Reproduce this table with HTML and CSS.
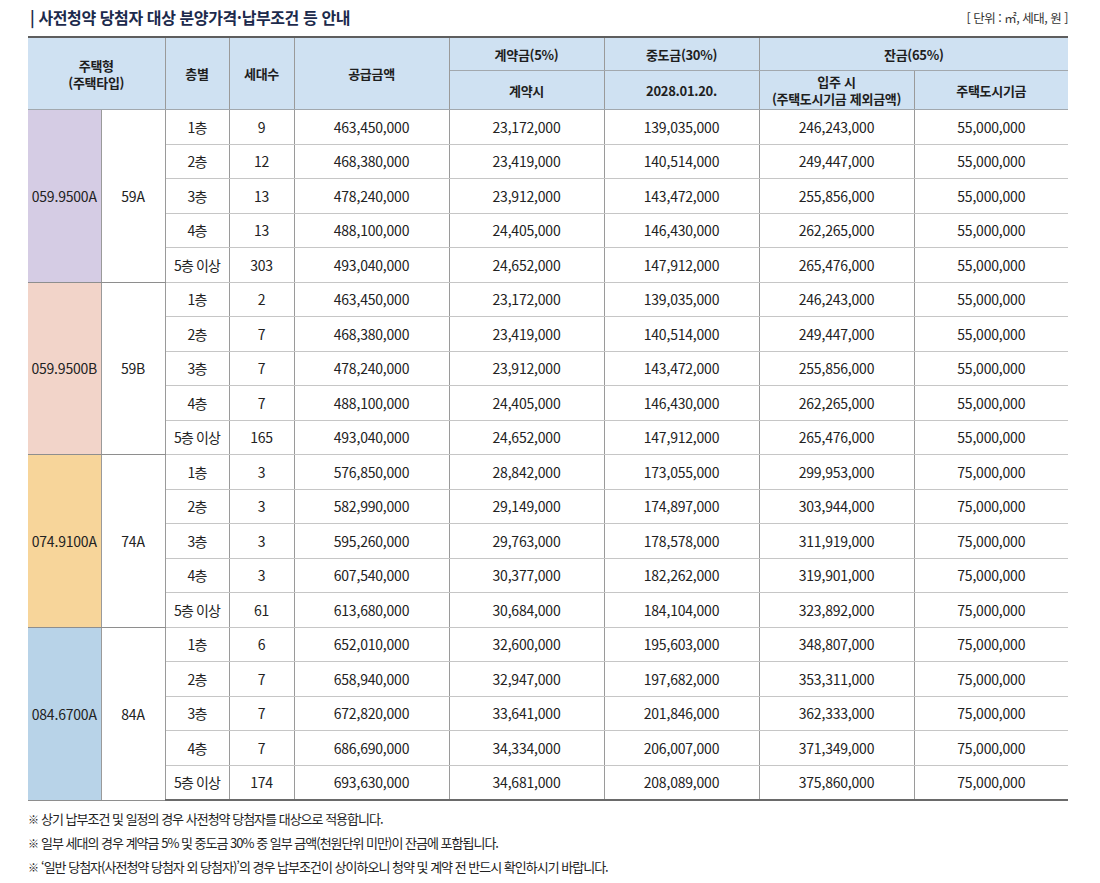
FILE: index.html
```html
<!DOCTYPE html>
<html lang="ko">
<head>
<meta charset="utf-8">
<link rel="stylesheet" href="styles.css">
</head>
<body>
<div class="page">
  <div class="top">
    <h1 class="title">| 사전청약 당첨자 대상 분양가격·납부조건 등 안내</h1>
    <span class="unit">[ 단위 : ㎡, 세대, 원 ]</span>
  </div>
  <table class="price">
    <colgroup>
      <col style="width:73px"><col style="width:64px"><col style="width:64px"><col style="width:65px">
      <col style="width:155px"><col style="width:155px"><col style="width:155px"><col style="width:155px"><col style="width:154px">
    </colgroup>
    <thead>
      <tr class="h1">
        <th colspan="2" rowspan="2">주택형<br>(주택타입)</th>
        <th rowspan="2">층별</th>
        <th rowspan="2">세대수</th>
        <th rowspan="2">공급금액</th>
        <th>계약금(5%)</th>
        <th>중도금(30%)</th>
        <th colspan="2">잔금(65%)</th>
      </tr>
      <tr class="h2">
        <th>계약시</th>
        <th>2028.01.20.</th>
        <th>입주 시<br>(주택도시기금 제외금액)</th>
        <th>주택도시기금</th>
      </tr>
    </thead>
    <tbody>
      <tr class="gs"><td rowspan="5" class="c purple">059.9500A</td><td rowspan="5" class="t">59A</td><td class="fl">1층</td><td>9</td><td>463,450,000</td><td>23,172,000</td><td>139,035,000</td><td>246,243,000</td><td>55,000,000</td></tr>
      <tr><td class="fl">2층</td><td>12</td><td>468,380,000</td><td>23,419,000</td><td>140,514,000</td><td>249,447,000</td><td>55,000,000</td></tr>
      <tr><td class="fl">3층</td><td>13</td><td>478,240,000</td><td>23,912,000</td><td>143,472,000</td><td>255,856,000</td><td>55,000,000</td></tr>
      <tr><td class="fl">4층</td><td>13</td><td>488,100,000</td><td>24,405,000</td><td>146,430,000</td><td>262,265,000</td><td>55,000,000</td></tr>
      <tr><td class="fl">5층 이상</td><td>303</td><td>493,040,000</td><td>24,652,000</td><td>147,912,000</td><td>265,476,000</td><td>55,000,000</td></tr>

      <tr class="gs"><td rowspan="5" class="c pink">059.9500B</td><td rowspan="5" class="t">59B</td><td class="fl">1층</td><td>2</td><td>463,450,000</td><td>23,172,000</td><td>139,035,000</td><td>246,243,000</td><td>55,000,000</td></tr>
      <tr><td class="fl">2층</td><td>7</td><td>468,380,000</td><td>23,419,000</td><td>140,514,000</td><td>249,447,000</td><td>55,000,000</td></tr>
      <tr><td class="fl">3층</td><td>7</td><td>478,240,000</td><td>23,912,000</td><td>143,472,000</td><td>255,856,000</td><td>55,000,000</td></tr>
      <tr><td class="fl">4층</td><td>7</td><td>488,100,000</td><td>24,405,000</td><td>146,430,000</td><td>262,265,000</td><td>55,000,000</td></tr>
      <tr><td class="fl">5층 이상</td><td>165</td><td>493,040,000</td><td>24,652,000</td><td>147,912,000</td><td>265,476,000</td><td>55,000,000</td></tr>

      <tr class="gs"><td rowspan="5" class="c orange">074.9100A</td><td rowspan="5" class="t">74A</td><td class="fl">1층</td><td>3</td><td>576,850,000</td><td>28,842,000</td><td>173,055,000</td><td>299,953,000</td><td>75,000,000</td></tr>
      <tr><td class="fl">2층</td><td>3</td><td>582,990,000</td><td>29,149,000</td><td>174,897,000</td><td>303,944,000</td><td>75,000,000</td></tr>
      <tr><td class="fl">3층</td><td>3</td><td>595,260,000</td><td>29,763,000</td><td>178,578,000</td><td>311,919,000</td><td>75,000,000</td></tr>
      <tr><td class="fl">4층</td><td>3</td><td>607,540,000</td><td>30,377,000</td><td>182,262,000</td><td>319,901,000</td><td>75,000,000</td></tr>
      <tr><td class="fl">5층 이상</td><td>61</td><td>613,680,000</td><td>30,684,000</td><td>184,104,000</td><td>323,892,000</td><td>75,000,000</td></tr>

      <tr class="gs"><td rowspan="5" class="c blue">084.6700A</td><td rowspan="5" class="t">84A</td><td class="fl">1층</td><td>6</td><td>652,010,000</td><td>32,600,000</td><td>195,603,000</td><td>348,807,000</td><td>75,000,000</td></tr>
      <tr><td class="fl">2층</td><td>7</td><td>658,940,000</td><td>32,947,000</td><td>197,682,000</td><td>353,311,000</td><td>75,000,000</td></tr>
      <tr><td class="fl">3층</td><td>7</td><td>672,820,000</td><td>33,641,000</td><td>201,846,000</td><td>362,333,000</td><td>75,000,000</td></tr>
      <tr><td class="fl">4층</td><td>7</td><td>686,690,000</td><td>34,334,000</td><td>206,007,000</td><td>371,349,000</td><td>75,000,000</td></tr>
      <tr class="last"><td class="fl">5층 이상</td><td>174</td><td>693,630,000</td><td>34,681,000</td><td>208,089,000</td><td>375,860,000</td><td>75,000,000</td></tr>
    </tbody>
  </table>
  <ul class="notes">
    <li><span class="mark">※</span>상기 납부조건 및 일정의 경우 사전청약 당첨자를 대상으로 적용합니다.</li>
    <li><span class="mark">※</span>일부 세대의 경우 계약금 5% 및 중도금 30% 중 일부 금액(천원단위 미만)이 잔금에 포함됩니다.</li>
    <li><span class="mark">※</span>‘일반 당첨자(사전청약 당첨자 외 당첨자)’의 경우 납부조건이 상이하오니 청약 및 계약 전 반드시 확인하시기 바랍니다.</li>
  </ul>
</div>
</body>
</html>
```

FILE: styles.css
```css
html, body {
  margin: 0;
  padding: 0;
  background: #ffffff;
}
body {
  font-family: "Noto Sans CJK KR", "Noto Sans", sans-serif;
  color: #222222;
}
.page {
  width: 1040px;
  padding: 0 32px 0 28px;
}
.top {
  height: 36px;
  display: flex;
  align-items: center;
  justify-content: space-between;
}
.title {
  margin: 0 0 2px 2px;
  font-size: 16px;
  font-weight: 700;
  letter-spacing: -0.4px;
  color: #1c2a4c;
  line-height: 20px;
}
.unit {
  font-size: 12.5px;
  color: #333333;
  letter-spacing: -0.5px;
  margin-bottom: 2px;
}
.price {
  width: 1040px;
  table-layout: fixed;
  border-collapse: collapse;
  font-size: 14px;
}
.price th {
  background: #cfe1f2;
  font-weight: 700;
  font-size: 13px;
  letter-spacing: -0.3px;
  line-height: 17px;
  color: #1e1e1e;
  border-left: 1px solid #9a9a9a;
  border-right: 1px solid #9a9a9a;
  border-bottom: 1px solid #a2a8ae;
  padding: 0;
  text-align: center;
}
.price thead tr.h1 th {
  border-top: 2px solid #5e5e5e;
  height: 32px;
}
.price thead tr.h2 th {
  height: 38px;
}
.price thead tr.h1 th:first-child { border-left: none; }
.price thead tr.h1 th:last-child,
.price thead tr.h2 th:last-child { border-right: none; }
.price td {
  height: 33.5px;
  padding: 0;
  text-align: center;
  color: #222222;
  border-left: 1px solid #9a9a9a;
  border-right: 1px solid #9a9a9a;
  border-bottom: 1px solid #c6c6c6;
  letter-spacing: -0.2px;
}
.price td:last-child { border-right: none; }
.price tr.gs td { border-top: 1px solid #8e8e8e; }
.price td.c {
  border-left: none;
  border-bottom: 1px solid #8e8e8e;
}
.price td.t { border-bottom: 1px solid #8e8e8e; }
.price tr.last td { border-bottom: 2px solid #6a6a6a; }
.price td.fl { letter-spacing: -0.9px; }
.purple { background: #d5cce4; }
.pink { background: #f2d4c9; }
.orange { background: #f7d59a; }
.blue { background: #b8d3e8; }
.notes {
  list-style: none;
  margin: 0;
  padding: 6px 0 0 0;
  font-size: 13px;
  letter-spacing: -1px;
  color: #222222;
}
.notes li {
  line-height: 23px;
}
.mark {
  font-size: 11px;
  margin-right: 2px;
  letter-spacing: 0;
}
```
